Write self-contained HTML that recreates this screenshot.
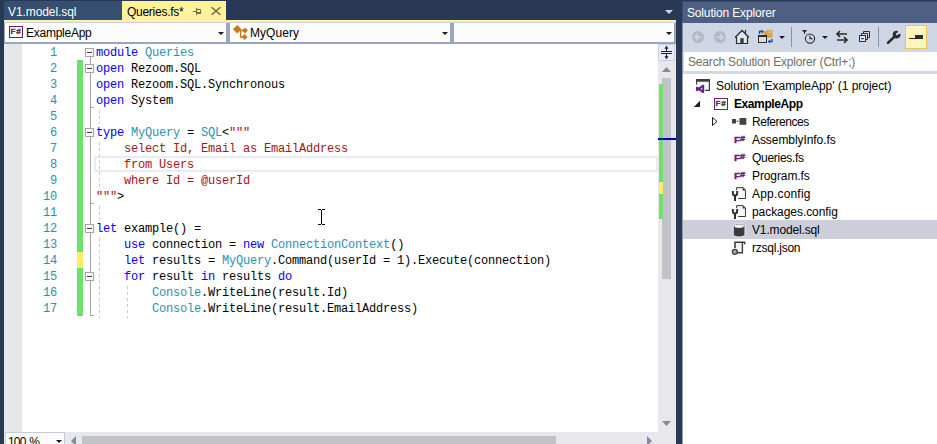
<!DOCTYPE html>
<html lang="en">
<head>
<meta charset="utf-8">
<title>Queries.fs - ExampleApp</title>
<style>
*{box-sizing:border-box;margin:0;padding:0}
html,body{width:937px;height:444px;overflow:hidden;background:#fff}
body{position:relative;font-family:"Liberation Sans",sans-serif;font-size:12px;color:#000}
.abs{position:absolute}
#navy{left:0;top:0;width:937px;height:444px;background:#293955}
/* ---------- document tabs ---------- */
.tab{position:absolute;height:18px;line-height:20px;white-space:nowrap;font-size:12px}
#tab1{left:4px;top:1px;width:118px;height:19px;line-height:22px;background:#364e6f;color:#fff;padding-left:4px;letter-spacing:-0.09px}
#tab2{left:122px;top:1px;width:104px;height:19px;line-height:22px;background:#fff29d;color:#000;padding-left:5px;letter-spacing:-0.27px}
#tabline{left:4px;top:20px;width:672px;height:2px;background:#fff29d}
/* ---------- nav bar ---------- */
#navbar{left:4px;top:22px;width:672px;height:22px;background:#9aa5be;border-top:1px solid #c9d0e3}
.dd{position:absolute;top:0;height:19px;background:#fcfcfc;line-height:20px;white-space:nowrap}
.fsbox{position:absolute;width:14px;height:12px;border:1px solid #68217a;background:#fff;font:bold 8px/10px "Liberation Sans",sans-serif;color:#424242;text-align:center;letter-spacing:0.9px;-webkit-text-stroke:0.35px #424242}
/* scrollbars */
.sb{position:absolute;background:#e8e8ec}
.thumb{position:absolute;background:#c2c3c9}
.tri{position:absolute;width:0;height:0}
.dd .lbl{position:absolute;top:0;color:#000}
.arr{position:absolute;width:0;height:0;border-left:3px solid transparent;border-right:3px solid transparent;border-top:3px solid #1b1b28}
/* ---------- editor ---------- */
#editor{left:4px;top:44px;width:654px;height:388px;background:#fff}
#indic{left:4px;top:44px;width:18px;height:388px;background:#e6e7e8}
.code{position:absolute;left:0;white-space:pre;font-family:"Liberation Mono",monospace;font-size:12px;letter-spacing:-0.2px;height:16px;line-height:16px;color:#000}
.ln{position:absolute;left:22px;width:35px;text-align:right;font-family:"Liberation Mono",monospace;font-size:12px;letter-spacing:-0.2px;height:16px;line-height:16px;color:#2b91af}
.k{color:#00f}.t{color:#2b91af}.s{color:#a31515}
.obox{position:absolute;left:85px;width:9px;height:9px;border:1px solid #a5a5a5;background:#fff}
.obox i{position:absolute;left:1px;top:3px;width:5px;height:1px;background:#404040}
.guide{position:absolute;width:1px;background:repeating-linear-gradient(to bottom,transparent 0,transparent 2px,#cbcbcb 2px,#cbcbcb 5px,transparent 5px,transparent 6px)}
/* ---------- solution explorer ---------- */
#se{left:683px;top:0;width:254px;height:444px}
#setitle{left:683px;top:2px;width:254px;height:21px;background:#4d6082;color:#fff;line-height:22px;padding-left:4px;white-space:nowrap}
#setool{left:683px;top:22px;width:254px;height:29px;background:#cfd6e5}
#sesearch{left:684px;top:52px;width:260px;height:19px;background:#fff;color:#6d6d6d;line-height:21px;padding-left:4px;white-space:nowrap}
#sesframe{left:683px;top:51px;width:254px;height:23px;background:#d2d8e8}
#setree{left:683px;top:51px;width:254px;height:393px;background:#fff}
.fsic{position:absolute;font:bold 9.5px/10px "Liberation Sans",sans-serif;color:#68217a;white-space:nowrap;letter-spacing:0;-webkit-text-stroke:0.4px #68217a}
.fsic b{display:inline-block;transform:scaleX(1.08);transform-origin:0 0}
.fsic span{display:inline-block;font-size:7.5px;position:relative;top:-2px;left:0.9px;transform:scaleX(1.2);transform-origin:0 0}
.ti{position:absolute;height:18px;line-height:20px;white-space:nowrap}
</style>
</head>
<body>
<div id="navy" class="abs"></div>

<!-- document tab well -->
<div id="tab1" class="tab">V1.model.sql</div>
<div id="tab2" class="tab">Queries.fs*</div>
<svg class="abs" style="left:192px;top:7px" width="11" height="9" viewBox="0 0 11 9"><path d="M1 4.5H4.5M4.6 0.8V8M4.6 2.5H8.6V6H4.6" fill="none" stroke="#75633d" stroke-width="1"/><rect x="4.1" y="5" width="5" height="1.7" fill="#75633d"/></svg>
<svg class="abs" style="left:211px;top:7px" width="10" height="8" viewBox="0 0 10 8"><path d="M0.6 0.2L9.4 7.8M9.4 0.2L0.6 7.8" fill="none" stroke="#75633d" stroke-width="1.4"/></svg>
<div class="tri" style="left:665px;top:10px;border-left:4px solid transparent;border-right:4px solid transparent;border-top:4px solid #ced4dd"></div>
<div id="tabline" class="abs"></div>

<!-- navigation bar -->
<div id="navbar" class="abs">
  <div class="dd" style="left:1px;width:221px"><div class="fsbox" style="left:4px;top:3px">F#</div><span class="lbl" style="left:21px;letter-spacing:-0.25px">ExampleApp</span><div class="arr" style="left:213px;top:9px"></div></div>
  <div class="dd" style="left:226px;width:220px">
    <svg class="abs" style="left:2px;top:1px" width="16" height="16" viewBox="0 0 16 16"><path d="M5.2 1L9.5 5.3L5.2 9.6L0.9 5.3Z" fill="#c27d1a"/><path d="M7 6.5H13M8.6 6.5V13H13" fill="none" stroke="#c27d1a" stroke-width="1.4"/><path d="M13 3.6L15.9 6.5L13 9.4L10.1 6.5Z" fill="#c27d1a"/><path d="M12.6 10.1L15.5 13L12.6 15.9L9.7 13Z" fill="#c27d1a"/></svg>
    <span class="lbl" style="left:20px;letter-spacing:0.04px">MyQuery</span><div class="arr" style="left:212px;top:9px"></div></div>
  <div class="dd" style="left:450px;width:220px"><div class="arr" style="left:212px;top:9px"></div></div>
</div>

<!-- editor -->
<div id="editor" class="abs"></div>
<div id="indic" class="abs"></div>
<!--CODE-->
<div id="code" class="abs" style="left:0;top:0">
<div class="abs" style="left:94px;top:156px;width:564px;height:16px;border:2px solid #eaeaf2"></div>
<div class="abs" style="left:77px;top:60px;width:6px;height:256px;background:#6ce26c"></div>
<div class="abs" style="left:77px;top:252px;width:6px;height:16px;background:#ffee62"></div>
<div class="ln" style="top:45px">1</div>
<div class="code" style="left:96px;top:45px"><span class="k">module</span> <span class="t">Queries</span></div>
<div class="ln" style="top:61px">2</div>
<div class="code" style="left:96px;top:61px"><span class="k">open</span> Rezoom.SQL</div>
<div class="ln" style="top:77px">3</div>
<div class="code" style="left:96px;top:77px"><span class="k">open</span> Rezoom.SQL.Synchronous</div>
<div class="ln" style="top:93px">4</div>
<div class="code" style="left:96px;top:93px"><span class="k">open</span> System</div>
<div class="ln" style="top:109px">5</div>
<div class="ln" style="top:125px">6</div>
<div class="code" style="left:96px;top:125px"><span class="k">type</span> <span class="t">MyQuery</span> = <span class="t">SQL</span>&lt;<span class="s">"""</span></div>
<div class="ln" style="top:141px">7</div>
<div class="code" style="left:96px;top:141px"><span class="s">    select Id, Email as EmailAddress</span></div>
<div class="ln" style="top:157px">8</div>
<div class="code" style="left:96px;top:157px"><span class="s">    from Users</span></div>
<div class="ln" style="top:173px">9</div>
<div class="code" style="left:96px;top:173px"><span class="s">    where Id = @userId</span></div>
<div class="ln" style="top:189px">10</div>
<div class="code" style="left:96px;top:189px"><span class="s">"""</span>&gt;</div>
<div class="ln" style="top:205px">11</div>
<div class="ln" style="top:221px">12</div>
<div class="code" style="left:96px;top:221px"><span class="k">let</span> example() =</div>
<div class="ln" style="top:237px">13</div>
<div class="code" style="left:96px;top:237px">    <span class="k">use</span> connection = <span class="k">new</span> <span class="t">ConnectionContext</span>()</div>
<div class="ln" style="top:253px">14</div>
<div class="code" style="left:96px;top:253px">    <span class="k">let</span> results = <span class="t">MyQuery</span>.Command(userId = 1).Execute(connection)</div>
<div class="ln" style="top:269px">15</div>
<div class="code" style="left:96px;top:269px">    <span class="k">for</span> result <span class="k">in</span> results <span class="k">do</span></div>
<div class="ln" style="top:285px">16</div>
<div class="code" style="left:96px;top:285px">        <span class="t">Console</span>.WriteLine(result.Id)</div>
<div class="ln" style="top:301px">17</div>
<div class="code" style="left:96px;top:301px">        <span class="t">Console</span>.WriteLine(result.EmailAddress)</div>
<div class="abs" style="left:90px;top:57px;width:1px;height:259px;background:#a5a5a5"></div>
<div class="abs" style="left:90px;top:107px;width:4px;height:1px;background:#a5a5a5"></div>
<div class="abs" style="left:90px;top:203px;width:4px;height:1px;background:#a5a5a5"></div>
<div class="abs" style="left:90px;top:315px;width:4px;height:1px;background:#a5a5a5"></div>
<div class="obox" style="top:48px"><i></i></div>
<div class="obox" style="top:64px"><i></i></div>
<div class="obox" style="top:128px"><i></i></div>
<div class="obox" style="top:224px"><i></i></div>
<div class="obox" style="top:272px"><i></i></div>
<div class="guide" style="left:99px;top:108px;height:16px"></div>
<div class="guide" style="left:99px;top:140px;height:48px"></div>
<div class="guide" style="left:99px;top:204px;height:16px"></div>
<div class="guide" style="left:99px;top:236px;height:82px"></div>
<div class="guide" style="left:127px;top:284px;height:34px"></div>
</div>
<!--/CODE-->

<!-- mouse I-beam -->
<svg class="abs" style="left:318px;top:209px" width="7" height="16" viewBox="0 0 7 16" shape-rendering="crispEdges"><path d="M0 0.5H3M4 0.5H7M3.5 1V15M0 15.5H3M4 15.5H7" stroke="#000" stroke-width="1" fill="none"/></svg>
<!-- vertical scrollbar -->
<div class="sb" style="left:658px;top:44px;width:18px;height:400px"></div>
<div class="abs" style="left:658px;top:44px;width:17px;height:17px;background:#e8ecfa;border:1px solid #c8cede"></div>
<svg class="abs" style="left:659px;top:45px" width="15" height="15" viewBox="0 0 15 15"><path d="M2 6.5H13M2 8.5H13" stroke="#1e1e2e" stroke-width="1" fill="none"/><path d="M7.5 2V6M7.5 9V13" stroke="#1e1e2e" stroke-width="1" fill="none"/><path d="M7.5 0.8L9.6 3.8H5.4ZM7.5 14.2L9.6 11.2H5.4Z" fill="#1e1e2e"/></svg>
<svg class="abs" style="left:658px;top:62px" width="17" height="370" viewBox="0 0 17 370"><path d="M4 10H13L8.5 5Z" fill="#868999"/><path d="M4 359H13L8.5 364Z" fill="#868999"/></svg>
<div class="thumb" style="left:662px;top:78px;width:9px;height:201px"></div>
<div class="abs" style="left:659px;top:84px;width:4px;height:135px;background:#6ce26c"></div>
<div class="abs" style="left:659px;top:182px;width:4px;height:12px;background:#ffee62"></div>
<div class="abs" style="left:658px;top:138px;width:18px;height:2px;background:#0000cd"></div>
<!-- horizontal scrollbar -->
<div class="sb" style="left:4px;top:432px;width:654px;height:12px"></div>
<div class="abs" style="left:5px;top:432px;width:60px;height:14px;background:#fcfcfc;border:1px solid #c6cbdc"></div>
<div class="abs" style="left:8px;top:435px;height:14px;line-height:14px;letter-spacing:-0.8px;word-spacing:1.2px;white-space:nowrap">100 %</div>
<div class="arr" style="left:56px;top:440px"></div>
<div class="tri" style="left:71px;top:436px;border-top:5px solid transparent;border-bottom:5px solid transparent;border-right:5px solid #868999"></div>
<div class="thumb" style="left:82px;top:436px;width:474px;height:8px"></div>
<div class="tri" style="left:647px;top:436px;border-top:5px solid transparent;border-bottom:5px solid transparent;border-left:5px solid #868999"></div>

<!-- solution explorer -->
<div class="abs" style="left:682px;top:2px;width:1px;height:21px;background:#3b4d6c"></div>
<div class="abs" style="left:682px;top:22px;width:1px;height:29px;background:#7c88a0"></div>
<div class="abs" style="left:682px;top:51px;width:1px;height:393px;background:#949caa"></div>
<div id="setitle" class="abs"><span style="letter-spacing:-0.16px">Solution Explorer</span></div>
<div id="setool" class="abs">
  <!-- back / forward (disabled) -->
  <svg class="abs" style="left:8px;top:8px" width="14" height="14" viewBox="0 0 14 14"><circle cx="7" cy="7" r="6" fill="#b3b8c4"/><path d="M10.5 7H4.5M7 4L4 7L7 10" fill="none" stroke="#cbd0dc" stroke-width="1.8"/></svg>
  <svg class="abs" style="left:30px;top:8px" width="14" height="14" viewBox="0 0 14 14"><circle cx="7" cy="7" r="6" fill="#b3b8c4"/><path d="M3.5 7H9.5M7 4L10 7L7 10" fill="none" stroke="#cbd0dc" stroke-width="1.8"/></svg>
  <!-- home -->
  <svg class="abs" style="left:51px;top:7px" width="16" height="16" viewBox="0 0 16 16"><path d="M2.5 14.5V8.5L8 2.5L13.5 8.5V14.5Z" fill="#e1e4ef" stroke="none"/><path d="M1 8.5L8 1.5L15 8.5" fill="none" stroke="#2d2d2d" stroke-width="1.3"/><path d="M2.5 8V14.5H13.5V8" fill="none" stroke="#2d2d2d" stroke-width="1.2"/><rect x="6.3" y="9.2" width="3.4" height="5.3" fill="#3b3b3b"/><path d="M11.5 1V4.5" stroke="#2d2d2d" stroke-width="1.2"/></svg>
  <!-- switch views -->
  <svg class="abs" style="left:74px;top:7px" width="17" height="15" viewBox="0 0 17 15"><path d="M6.3 2H9L10 1H15.5V8.8H6.3Z" fill="#dca44f"/><rect x="11" y="2.5" width="3.5" height="1" fill="#f0cf95"/><rect x="1.5" y="6.5" width="8" height="7" fill="#d9dbe7" stroke="#2d2d2d" stroke-width="1"/><rect x="1" y="6" width="9" height="2" fill="#2d2d2d"/><path d="M2.5 5V2.5H5" fill="none" stroke="#0e4c9e" stroke-width="1.3"/><path d="M4.5 0.5L6.8 2.5L4.5 4.5Z" fill="#0e4c9e"/><path d="M15 10V12.5H12.5" fill="none" stroke="#0e4c9e" stroke-width="1.3"/><path d="M13 10.5L10.7 12.5L13 14.5Z" fill="#0e4c9e"/></svg>
  <div class="arr" style="left:96px;top:14px"></div>
  <div class="abs" style="left:108px;top:5px;width:1px;height:20px;background:#8591ab"></div>
  <!-- pending changes filter -->
  <svg class="abs" style="left:118px;top:7px" width="16" height="16" viewBox="0 0 16 16"><path d="M0.8 1H6.2L4 3.4V5H3V3.4Z" fill="#2d2d2d"/><circle cx="9" cy="9.6" r="4.6" fill="none" stroke="#2d2d2d" stroke-width="1.1"/><path d="M9 6.5V9.6H11.5" fill="none" stroke="#2d2d2d" stroke-width="1.1"/></svg>
  <div class="arr" style="left:139px;top:14px"></div>
  <!-- sync -->
  <svg class="abs" style="left:152px;top:8px" width="14" height="14" viewBox="0 0 14 14"><path d="M12 4H2M5 1L2 4L5 7" fill="none" stroke="#2d2d2d" stroke-width="1.7"/><path d="M2 10H12M9 7L12 10L9 13" fill="none" stroke="#2d2d2d" stroke-width="1.7"/></svg>
  <!-- collapse all -->
  <svg class="abs" style="left:175px;top:8px" width="13" height="13" viewBox="0 0 13 13"><path d="M5.5 3.5V1.5H11.5V7.5H9.5" fill="none" stroke="#2d2d2d" stroke-width="1"/><path d="M3.5 5.5V3.5H9.5V9.5H7.5" fill="none" stroke="#2d2d2d" stroke-width="1"/><rect x="1.5" y="5.5" width="6" height="6" fill="#e8eaf3" stroke="#2d2d2d" stroke-width="1"/><rect x="3" y="8" width="3" height="1.2" fill="#0e4c9e"/></svg>
  <div class="abs" style="left:195px;top:5px;width:1px;height:20px;background:#8591ab"></div>
  <!-- properties wrench -->
  <svg class="abs" style="left:203px;top:8px" width="16" height="15" viewBox="0 0 16 15"><path d="M2 12.9L8.6 6.5" fill="none" stroke="#2d2d2d" stroke-width="2.6" stroke-linecap="round"/><circle cx="10.6" cy="4.6" r="3.9" fill="#2d2d2d"/><path d="M10.3 5L12.7 -0.3L15.8 3Z" fill="#cfd6e5"/><circle cx="11" cy="4.2" r="1.1" fill="#cfd6e5"/></svg>
  <!-- preview selected items (checked) -->
  <div class="abs" style="left:222px;top:3px;width:22px;height:24px;background:#fdf4bf;border:1px solid #e8c55f"></div>
  <svg class="abs" style="left:225px;top:12px" width="16" height="6" viewBox="0 0 16 6" shape-rendering="crispEdges"><rect x="1" y="4" width="14" height="1" fill="#2d2d2d"/><rect x="7" y="1" width="8" height="4" fill="#2d2d2d"/></svg>
</div>
<div class="abs" style="left:683px;top:22px;width:254px;height:1px;background:#4d6082"></div>
<div class="abs" style="left:682px;top:1px;width:255px;height:1px;background:#3b4d6c"></div>
<div id="setree" class="abs"></div>
<div id="sesframe" class="abs"></div>
<div id="sesearch" class="abs"><span style="letter-spacing:-0.18px">Search Solution Explorer (Ctrl+;)</span></div>
<!--TREE-->
<div class="abs" style="left:683px;top:220px;width:254px;height:19px;background:#ccced9"></div>
<svg class="abs" style="left:695px;top:78px" width="16" height="16" viewBox="0 0 16 16"><rect x="2" y="3" width="12" height="9" fill="#f5f5f5"/><path d="M1 1H15V3.7H1Z" fill="#3b3b3b"/><path d="M1.5 3V6.7" stroke="#3b3b3b" stroke-width="1" fill="none"/><path d="M14.4 3V12.4H10.1" stroke="#3b3b3b" stroke-width="1.2" fill="none"/><path d="M0.6 7H9.6V15.2H0.6Z" fill="#fff"/><path d="M8.2 6.9V14.9" stroke="#68217a" stroke-width="2" fill="none"/><path d="M8.2 7.7L2 12.2M8.2 14.1L2 9.6" stroke="#68217a" stroke-width="2.1" fill="none"/><path d="M1.8 8.8V13" stroke="#68217a" stroke-width="1.7" fill="none"/></svg>
<div class="ti" style="left:716px;top:76px;letter-spacing:-0.04px">Solution 'ExampleApp' (1 project)</div>
<svg class="abs" style="left:693px;top:100px" width="8" height="8" viewBox="0 0 8 8"><path d="M7 0.8V7H0.8Z" fill="#1e1e1e"/></svg>
<div class="fsbox" style="left:714px;top:98px">F#</div>
<div class="ti" style="left:734px;top:94px;font-weight:bold;letter-spacing:-0.41px">ExampleApp</div>
<svg class="abs" style="left:711px;top:116px" width="8" height="11" viewBox="0 0 8 11"><path d="M1.5 1.5L6 5.5L1.5 9.5Z" fill="#fff" stroke="#1e1e1e" stroke-width="1"/></svg>
<svg class="abs" style="left:732px;top:117px" width="15" height="9" viewBox="0 0 15 9"><rect x="0" y="2" width="4" height="4.5" fill="#424242"/><rect x="4.6" y="3.6" width="1.8" height="1.2" fill="#424242"/><rect x="7.5" y="1" width="6.8" height="6.8" fill="#424242"/></svg>
<div class="ti" style="left:752px;top:112px;letter-spacing:-0.46px">References</div>
<div class="fsic" style="left:733.5px;top:135px"><b>F</b><span>#</span></div>
<div class="ti" style="left:752px;top:130px;letter-spacing:-0.07px">AssemblyInfo.fs</div>
<div class="fsic" style="left:733.5px;top:153px"><b>F</b><span>#</span></div>
<div class="ti" style="left:752px;top:148px;letter-spacing:-0.29px">Queries.fs</div>
<div class="fsic" style="left:733.5px;top:171px"><b>F</b><span>#</span></div>
<div class="ti" style="left:752px;top:166px;letter-spacing:-0.1px">Program.fs</div>
<svg class="abs" style="left:731px;top:186px" width="16" height="16" viewBox="0 0 16 16"><path d="M5.6 4.2V1.6H12L14.5 4.2V12.5H7.2" fill="#f6f6f6" stroke="#3b3b3b" stroke-width="1"/><path d="M11.6 1.1L15 4.5H11.6Z" fill="#3b3b3b"/><path d="M0.9 5H2.8V7.3A1.2 1.2 0 0 0 5.2 7.3V5H7.1V7.7A3.1 3.1 0 0 1 5 10.5V14.9H3V10.5A3.1 3.1 0 0 1 0.9 7.7Z" fill="#2b2b2b"/></svg>
<div class="ti" style="left:752px;top:184px;letter-spacing:0.19px">App.config</div>
<svg class="abs" style="left:731px;top:204px" width="16" height="16" viewBox="0 0 16 16"><path d="M5.6 4.2V1.6H12L14.5 4.2V12.5H7.2" fill="#f6f6f6" stroke="#3b3b3b" stroke-width="1"/><path d="M11.6 1.1L15 4.5H11.6Z" fill="#3b3b3b"/><path d="M0.9 5H2.8V7.3A1.2 1.2 0 0 0 5.2 7.3V5H7.1V7.7A3.1 3.1 0 0 1 5 10.5V14.9H3V10.5A3.1 3.1 0 0 1 0.9 7.7Z" fill="#2b2b2b"/></svg>
<div class="ti" style="left:752px;top:202px;letter-spacing:-0.06px">packages.config</div>
<svg class="abs" style="left:732px;top:222px" width="15" height="16" viewBox="0 0 15 16"><path d="M1.2 4V12.4C1.2 13.9 3.8 15 7.1 15S13 13.9 13 12.4V4C13 2.6 10.4 1.6 7.1 1.6S1.2 2.6 1.2 4Z" fill="#3b3b3b" stroke="#f4f4f8" stroke-width="1"/><ellipse cx="7.1" cy="4.1" rx="4.9" ry="1.9" fill="#f0f0f0"/></svg>
<div class="ti" style="left:752px;top:220px;letter-spacing:-0.15px">V1.model.sql</div>
<svg class="abs" style="left:731px;top:240px" width="16" height="16" viewBox="0 0 16 16"><rect x="4.8" y="3" width="6" height="9.6" fill="#f2f2f2"/><path d="M4 8V2.2H14" fill="none" stroke="#3b3b3b" stroke-width="1.6"/><path d="M13.8 2V4.2" fill="none" stroke="#3b3b3b" stroke-width="1.5"/><path d="M11.4 3V12.8H6" fill="none" stroke="#3b3b3b" stroke-width="1.4"/><circle cx="3.8" cy="11.8" r="2.5" fill="#a6a6a6" stroke="#3b3b3b" stroke-width="1.3"/></svg>
<div class="ti" style="left:752px;top:238px;letter-spacing:-0.24px">rzsql.json</div>
<!--/TREE-->
</body>
</html>
